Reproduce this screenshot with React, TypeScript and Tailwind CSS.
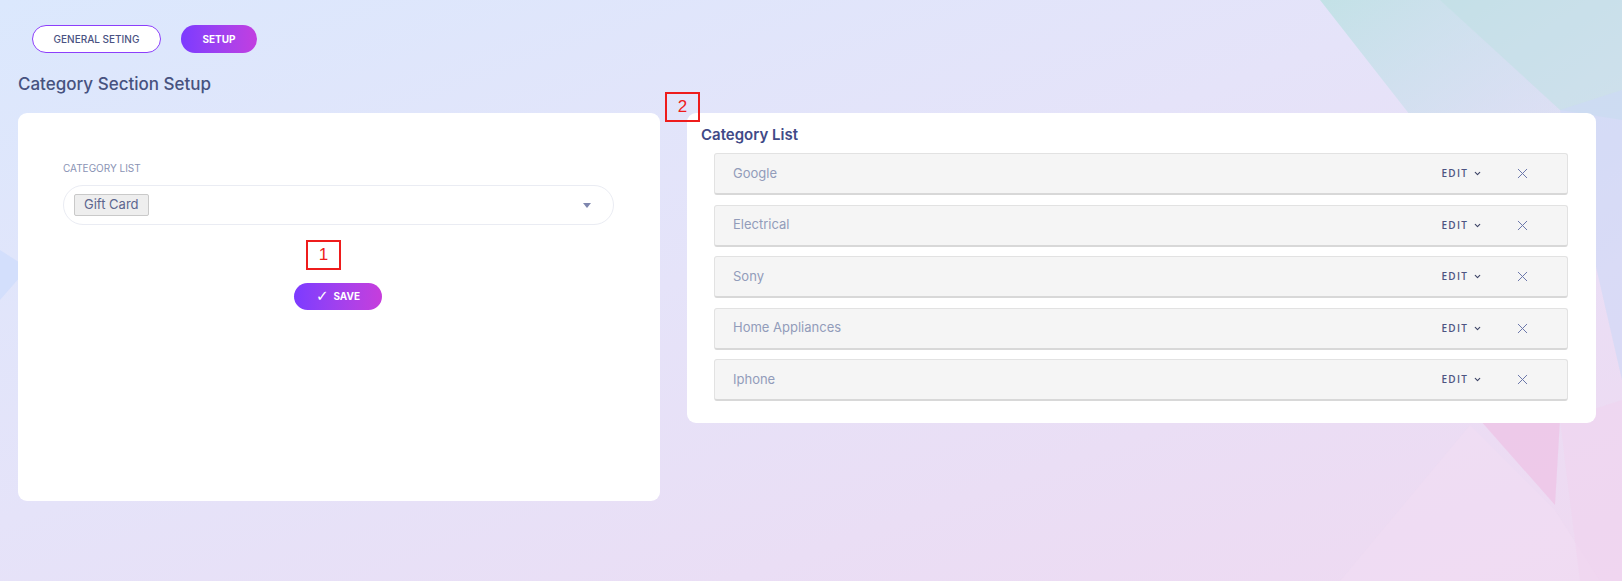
import { X, ChevronDown } from 'lucide-react';

const CATEGORIES = ['Google', 'Electrical', 'Sony', 'Home Appliances', 'Iphone'];

function Backdrop() {
  return (
    <svg
      className="absolute inset-0 w-full h-full"
      viewBox="0 0 1622 581"
      preserveAspectRatio="none"
    >
      <defs>
        <linearGradient id="bg" x1="0" y1="0" x2="1" y2="1">
          <stop offset="0" stopColor="#dbe8fd" />
          <stop offset="0.45" stopColor="#e5e3f9" />
          <stop offset="1" stopColor="#efd9f1" />
        </linearGradient>
        <linearGradient id="teal" x1="0" y1="0" x2="0.6" y2="1">
          <stop offset="0" stopColor="#bde1e3" />
          <stop offset="1" stopColor="#cfd9f5" stopOpacity="0" />
        </linearGradient>
      </defs>
      <rect width="1622" height="581" fill="url(#bg)" />
      <polygon points="1320,0 1622,0 1622,340 1500,230" fill="url(#teal)" opacity="0.85" />
      <polygon points="1440,0 1622,0 1622,120 1560,110" fill="#bfe0e3" opacity="0.55" />
      <polygon points="1560,110 1622,90 1622,380" fill="#cdd8f6" opacity="0.6" />
      <polygon points="1480,420 1560,420 1555,505" fill="#eec3e6" opacity="0.75" />
      <polygon points="1470,425 1340,581 1600,581 1555,510" fill="#f2def3" opacity="0.5" />
      <polygon points="1560,420 1622,400 1622,581 1580,581" fill="#f1d3ee" opacity="0.55" />
      <polygon points="0,250 28,268 0,300" fill="#d2defc" opacity="0.9" />
    </svg>
  );
}

function Annotation({ n, className }: { n: number; className: string }) {
  return (
    <div
      className={`absolute z-10 w-[35px] h-[30px] border-2 border-[#ee1c1c] flex items-center justify-center text-[17px] text-[#ee1c1c] font-['Liberation_Sans',sans-serif] ${className}`}
    >
      {n}
    </div>
  );
}

export default function App() {
  return (
    <div className="relative w-full min-h-[581px] overflow-hidden font-['Inter',sans-serif]">
      <Backdrop />

      <div className="relative px-[18px] pt-[25px]">
        {/* tabs */}
        <div className="flex gap-5 pl-[14px]">
          <button className="h-[28px] w-[129px] rounded-full bg-white border border-[#8c3ffb] text-[10px] font-medium text-[#4a5282] uppercase">
            General Seting
          </button>
          <button className="h-[28px] w-[76px] rounded-full bg-gradient-to-r from-[#7c3aff] to-[#c23ee0] text-[10px] font-bold text-white uppercase">
            Setup
          </button>
        </div>

        <h1 className="mt-[19px] text-[17px] font-medium text-[#47527f] leading-[24px]">
          Category Section Setup
        </h1>

        <div className="mt-[17px] flex items-start gap-[27px] pr-[8px]">
          {/* left card */}
          <div className="relative w-[642px] h-[388px] bg-white rounded-[9px] pl-[45px] pr-[46px] pt-[49px]">
            <label className="block text-[10px] uppercase text-[#8a93b4] leading-[12px]">
              Category List
            </label>
            <div className="mt-[11px] h-[40px] rounded-full border border-[#eaecf3] flex items-center pl-[10px] pr-[22px]">
              <span className="h-[22px] px-[9px] flex items-center bg-[#eeeeee] border border-[#c9c9c9] rounded-[2px] text-[13px] text-[#5c668f]">
                Gift Card
              </span>
              <span className="ml-auto w-0 h-0 border-l-[4px] border-r-[4px] border-t-[5px] border-l-transparent border-r-transparent border-t-[#7e86ae]" />
            </div>

            <Annotation n={1} className="left-[288px] top-[127px]" />

            <div className="flex justify-center pr-[1px] mt-[58px]">
              <button className="h-[27px] w-[88px] rounded-full bg-gradient-to-r from-[#7c3aff] to-[#c63ddc] flex items-center justify-center gap-[5px] text-white text-[10px] font-bold uppercase">
                <span className="text-[15px] leading-none font-normal font-['DejaVu_Sans',sans-serif]">✓</span>
                Save
              </button>
            </div>
          </div>

          {/* right card */}
          <div className="relative flex-1 bg-white rounded-[9px] pl-[14px] pr-[28px] pt-[12px] pb-[22px]">
            <Annotation n={2} className="left-[-22px] top-[-21px]" />
            <h2 className="text-[15px] font-semibold text-[#3f4a87] leading-[20px]">
              Category List
            </h2>
            <div className="mt-[8px] ml-[13px] flex flex-col gap-[9.5px]">
              {CATEGORIES.map((c) => (
                <div
                  key={c}
                  className="h-[42px] flex items-center bg-[#f5f5f5] border border-[#e2e2e2] border-b-2 border-b-[#d8d8d8] rounded-[3px] pl-[18px] pr-[36px]"
                >
                  <span className="text-[13px] text-[#929cba]">{c}</span>
                  <button className="ml-auto flex items-center gap-[5px] text-[10px] font-semibold tracking-[0.12em] text-[#4d5482] font-['Open_Sans',sans-serif]">
                    EDIT
                    <ChevronDown size={9} strokeWidth={3} className="text-[#3d4466]" />
                  </button>
                  <button className="ml-[32px] text-[#6a76aa]">
                    <X size={17} strokeWidth={1.4} />
                  </button>
                </div>
              ))}
            </div>
          </div>
        </div>
      </div>
    </div>
  );
}
